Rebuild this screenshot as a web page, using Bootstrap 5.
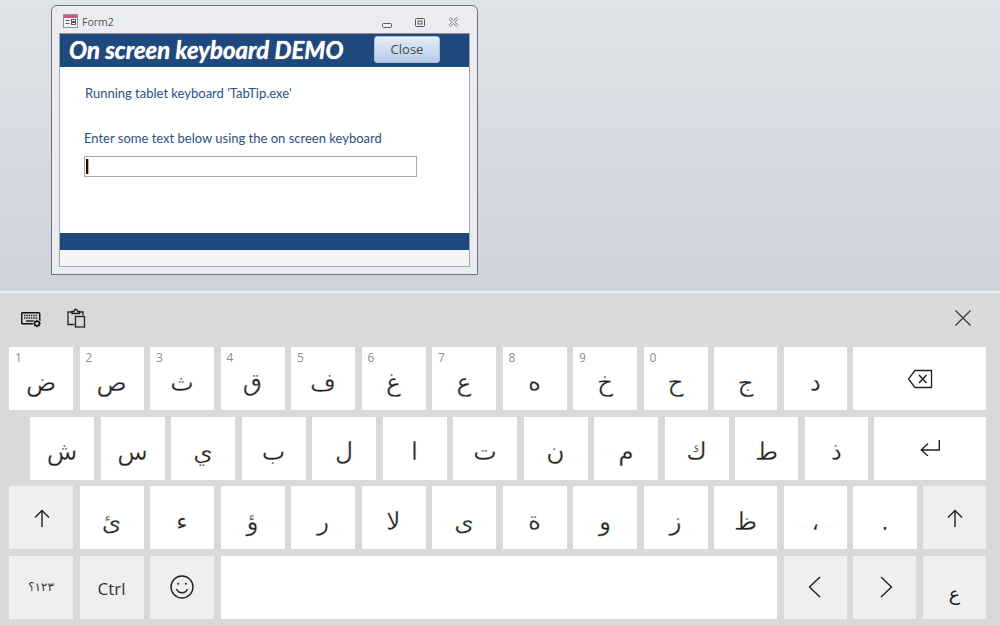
<!DOCTYPE html>
<html lang="ar">
<head>
<meta charset="utf-8">
<title>On screen keyboard DEMO</title>
<link href="https://cdn.jsdelivr.net/npm/bootstrap@5.3.0/dist/css/bootstrap.min.css" rel="stylesheet">
<style>
html,body{margin:0;height:625px;overflow:hidden}
body{background:#d9d9d9;font-family:"Liberation Sans",sans-serif}
.desk{height:291px;padding:5px 0 0 51px;background:linear-gradient(#e0e3e8,#ced2da)}
.win{width:427px;height:270px;background:#eaecf0;border:1px solid #6c7178;border-radius:6px 6px 0 0;padding:0 7px 7px}
.tbar{height:27px;padding:8px 0 0 4px}
.ttext{font:10.5px/14px "Open Sans",sans-serif;color:#555;margin:1px 0 0 4px}
.tbtns{gap:23px;margin-right:11px}
.client{height:234px;border:1px solid #a3a6ab;border-top-color:#8e9297;background:#fff}
.hdr{height:33px;background:#1f497d;padding:0 29px 0 9px}
.htitle{font:italic 700 24px/32px Lato,sans-serif;color:#fff;white-space:nowrap;text-shadow:0 0 1px #fff;margin-top:-1px}
.closeb{width:66px;height:27px;margin-top:-3px;border:1px solid #a9bedb;border-radius:3px;background:linear-gradient(#e4ecf7,#b7cce9);font:13px/24px "Open Sans",sans-serif;color:#4a4a4a;text-align:center}
.body1{height:166px;padding:18px 0 0 25px;color:#2b5085;font:13px/16px Lato,sans-serif}
.ln2{margin:29px 0 0 -1px}
.inp{width:333px;height:21px;margin:10px 0 0 -1px;border:1px solid #a8a8a8;padding:2px 0 0 1px}
.caret1{width:3px;height:15px;background:#e8a95a;border-left:2px solid #111}
.fbar{height:17px;background:#1f497d}
.fgrey{height:16px;background:#f5f5f5}
.kb{height:334px;background:#d9d9d9;border-top:2px solid #eceef1}
.ktools{height:54px;padding:17px 29px 0 21px}
.ktl{gap:25px}
.krows{row-gap:6.4px;padding-left:9px;display:flex;flex-direction:column}
.krow{column-gap:6.5px;height:63.2px}
.indent{padding-left:21px}
.ky{flex:0 0 64px;background:#fff;color:#222;position:relative;font:25px/1 "DejaVu Sans",sans-serif;padding-top:7px;-webkit-text-stroke:.3px #fff}
.nw{flex-basis:63.2px}
.wd1{flex-basis:133px}
.wd2{flex-basis:112px}
.spc{flex-basis:556.5px}
.fn{background:#efefef;-webkit-text-stroke:0}
.num{position:absolute;left:6px;top:4px;font:12px/14px "Open Sans",sans-serif;color:#8e8e8e;-webkit-text-stroke:0}
.ctl{font:17px/1 "Open Sans",sans-serif;color:#333;padding-top:2px}
.sm{font-size:12px;color:#333;padding-top:0}
.lng{font-size:19px;padding-top:13px}
.ic{padding-top:0}
.shl{padding-left:2px}
.cvl{padding-right:1px}
.cvr{padding-left:3px}
.iup{margin-top:-1px}
</style>
</head>
<body>
<div class="desk">
  <div class="win">
    <div class="tbar d-flex align-items-start">
      <svg width="15" height="14" viewBox="0 0 15 14"><rect x=".5" y=".5" width="14" height="13" fill="#f4f4f8" stroke="#8d8da0"/><rect x="1" y="1" width="13" height="3" fill="#c85a78"/><path d="M2.5 6.500h4M2.500 9.500h4" stroke="#555"/><rect x="8.500" y="5.500" width="4" height="2" fill="#fff" stroke="#555"/><rect x="8.500" y="8.500" width="4" height="2" fill="#fff" stroke="#555"/></svg>
      <span class="ttext">Form2</span>
      <div class="tbtns d-flex ms-auto align-items-start">
        <svg width="10" height="14" viewBox="0 0 10 14"><rect x=".5" y="9.500" width="9" height="4" rx="1" fill="#f2f2f2" stroke="#555"/></svg>
        <svg width="10" height="14" viewBox="0 0 10 14"><rect x=".5" y="4.500" width="9" height="8" rx="1" fill="#f2f2f2" stroke="#555"/><rect x="3" y="7" width="4" height="3" fill="none" stroke="#555"/></svg>
        <svg width="11" height="14" viewBox="0 0 11 14"><path d="M1.500 4 5.500 8 9.500 4M1.500 12 5.500 8 9.500 12" fill="none" stroke="#777" stroke-width="2.800"/><path d="M1.500 4 5.500 8 9.500 4M1.500 12 5.500 8 9.500 12" fill="none" stroke="#f2f2f2" stroke-width="1.300"/></svg>
      </div>
    </div>
    <div class="client">
      <div class="hdr d-flex align-items-center justify-content-between">
        <span class="htitle">On screen keyboard DEMO</span>
        <div class="closeb">Close</div>
      </div>
      <div class="body1">
        <div>Running tablet keyboard 'TabTip.exe'</div>
        <div class="ln2">Enter some text below using the on screen keyboard</div>
        <div class="inp"><div class="caret1"></div></div>
      </div>
      <div class="fbar"></div>
      <div class="fgrey"></div>
    </div>
  </div>
</div>
<div class="kb">
  <div class="ktools d-flex align-items-start justify-content-between">
    <div class="ktl d-flex align-items-start">
      <svg class="iup" width="21" height="20" viewBox="0 0 21 20"><rect x=".7" y="3.700" width="18" height="11" rx="1" fill="#d9d9d9" stroke="#111" stroke-width="1.500"/><path d="M3 6.500h14M3 9h14" stroke="#222" stroke-width="1.500" stroke-dasharray="1.400 .9"/><path d="M5 12h8" stroke="#222" stroke-width="1.500"/><circle cx="16" cy="14.500" r="4.200" fill="#d9d9d9"/><circle cx="16" cy="14.500" r="2.300" fill="none" stroke="#111" stroke-width="1.400"/><path d="M16 10.800v1.400M16 16.800v1.400M12.300 14.500h1.400M18.300 14.500h1.400M13.400 11.900l1 1M17.600 16.100l1 1M18.600 11.900l-1 1M14.400 16.100l-1 1" stroke="#111" stroke-width="1.300"/></svg>
      <svg width="19" height="20" viewBox="0 0 19 20" fill="none" stroke="#222" stroke-width="1.300" style="margin-top:-2px"><path d="M7.500 16.500H1V4h4.500M11.500 4H16v3.500"/><path d="M5 5.500V3.500h2c0-3 3-3 3.500 0H12.500v2z"/><rect x="8.500" y="8.500" width="9" height="10.500"/></svg>
    </div>
    <svg width="16" height="16" viewBox="0 0 16 16" stroke="#333" stroke-width="1.200"><path d="M.5.500l15 15M15.500.500l-15 15"/></svg>
  </div>
  <div class="krows">
    <div class="krow d-flex">
      <div class="ky d-flex align-items-center justify-content-center"><span class="num">1</span>ض</div>
      <div class="ky d-flex align-items-center justify-content-center"><span class="num">2</span>ص</div>
      <div class="ky d-flex align-items-center justify-content-center"><span class="num">3</span>ث</div>
      <div class="ky d-flex align-items-center justify-content-center"><span class="num">4</span>ق</div>
      <div class="ky d-flex align-items-center justify-content-center"><span class="num">5</span>ف</div>
      <div class="ky d-flex align-items-center justify-content-center"><span class="num">6</span>غ</div>
      <div class="ky d-flex align-items-center justify-content-center"><span class="num">7</span>ع</div>
      <div class="ky d-flex align-items-center justify-content-center"><span class="num">8</span>ه</div>
      <div class="ky d-flex align-items-center justify-content-center"><span class="num">9</span>خ</div>
      <div class="ky d-flex align-items-center justify-content-center"><span class="num">0</span>ح</div>
      <div class="ky nw d-flex align-items-center justify-content-center">ج</div>
      <div class="ky nw d-flex align-items-center justify-content-center">د</div>
      <div class="ky wd1 ic d-flex align-items-center justify-content-center"><svg width="26" height="20" viewBox="0 0 26 20" fill="none" stroke="#222" stroke-width="1.300"><path d="M24.500 1.500H8L1.500 10 8 18.500h16.500z"/><path d="M12 6l7.500 8M19.500 6 12 14" stroke-width="1.500"/></svg></div>
    </div>
    <div class="krow indent d-flex">
      <div class="ky d-flex align-items-center justify-content-center">ش</div>
      <div class="ky d-flex align-items-center justify-content-center">س</div>
      <div class="ky d-flex align-items-center justify-content-center">ي</div>
      <div class="ky d-flex align-items-center justify-content-center">ب</div>
      <div class="ky d-flex align-items-center justify-content-center">ل</div>
      <div class="ky d-flex align-items-center justify-content-center">ا</div>
      <div class="ky d-flex align-items-center justify-content-center">ت</div>
      <div class="ky d-flex align-items-center justify-content-center">ن</div>
      <div class="ky d-flex align-items-center justify-content-center">م</div>
      <div class="ky d-flex align-items-center justify-content-center">ك</div>
      <div class="ky nw d-flex align-items-center justify-content-center">ط</div>
      <div class="ky nw d-flex align-items-center justify-content-center">ذ</div>
      <div class="ky wd2 ic d-flex align-items-center justify-content-center"><svg width="20" height="16" viewBox="0 0 20 16" fill="none" stroke="#222" stroke-width="1.400"><path d="M19.300 0v10H1.500M8 3.500 1.200 10 8 16"/></svg></div>
    </div>
    <div class="krow d-flex">
      <div class="ky fn ic shl d-flex align-items-center justify-content-center"><svg width="16" height="18" viewBox="0 0 16 18" fill="none" stroke="#222" stroke-width="1.400"><path d="M8 18V1.500M1 8.500 8 1.500l7 7"/></svg></div>
      <div class="ky d-flex align-items-center justify-content-center">ئ</div>
      <div class="ky d-flex align-items-center justify-content-center">ء</div>
      <div class="ky d-flex align-items-center justify-content-center">ؤ</div>
      <div class="ky d-flex align-items-center justify-content-center">ر</div>
      <div class="ky d-flex align-items-center justify-content-center">لا</div>
      <div class="ky d-flex align-items-center justify-content-center">ى</div>
      <div class="ky d-flex align-items-center justify-content-center">ة</div>
      <div class="ky d-flex align-items-center justify-content-center">و</div>
      <div class="ky d-flex align-items-center justify-content-center">ز</div>
      <div class="ky nw d-flex align-items-center justify-content-center">ظ</div>
      <div class="ky nw d-flex align-items-center justify-content-center">،</div>
      <div class="ky nw d-flex align-items-center justify-content-center">.</div>
      <div class="ky nw fn ic d-flex align-items-center justify-content-center"><svg width="16" height="18" viewBox="0 0 16 18" fill="none" stroke="#222" stroke-width="1.400"><path d="M8 18V1.500M1 8.500 8 1.500l7 7"/></svg></div>
    </div>
    <div class="krow d-flex">
      <div class="ky fn sm d-flex align-items-center justify-content-center"><span dir="rtl">١٢٣؟</span></div>
      <div class="ky fn ctl d-flex align-items-center justify-content-center">Ctrl</div>
      <div class="ky fn ic d-flex align-items-center justify-content-center"><svg width="24" height="24" viewBox="0 0 24 24" fill="none" stroke="#222" stroke-width="1.400"><circle cx="12" cy="12" r="11"/><path d="M6.500 14c2 5 9 5 11 0"/><circle cx="8.200" cy="8.800" r="1" fill="#222" stroke="none"/><circle cx="15.800" cy="8.800" r="1" fill="#222" stroke="none"/></svg></div>
      <div class="ky spc"></div>
      <div class="ky nw fn ic cvl d-flex align-items-center justify-content-center"><svg width="13" height="22" viewBox="0 0 13 22" fill="none" stroke="#222" stroke-width="1.400"><path d="M12 1 1.500 11 12 21"/></svg></div>
      <div class="ky nw fn ic cvr d-flex align-items-center justify-content-center"><svg width="13" height="22" viewBox="0 0 13 22" fill="none" stroke="#222" stroke-width="1.400"><path d="M1 1l10.500 10L1 21"/></svg></div>
      <div class="ky nw fn lng d-flex align-items-center justify-content-center">ع</div>
    </div>
  </div>
</div>
</body>
</html>
